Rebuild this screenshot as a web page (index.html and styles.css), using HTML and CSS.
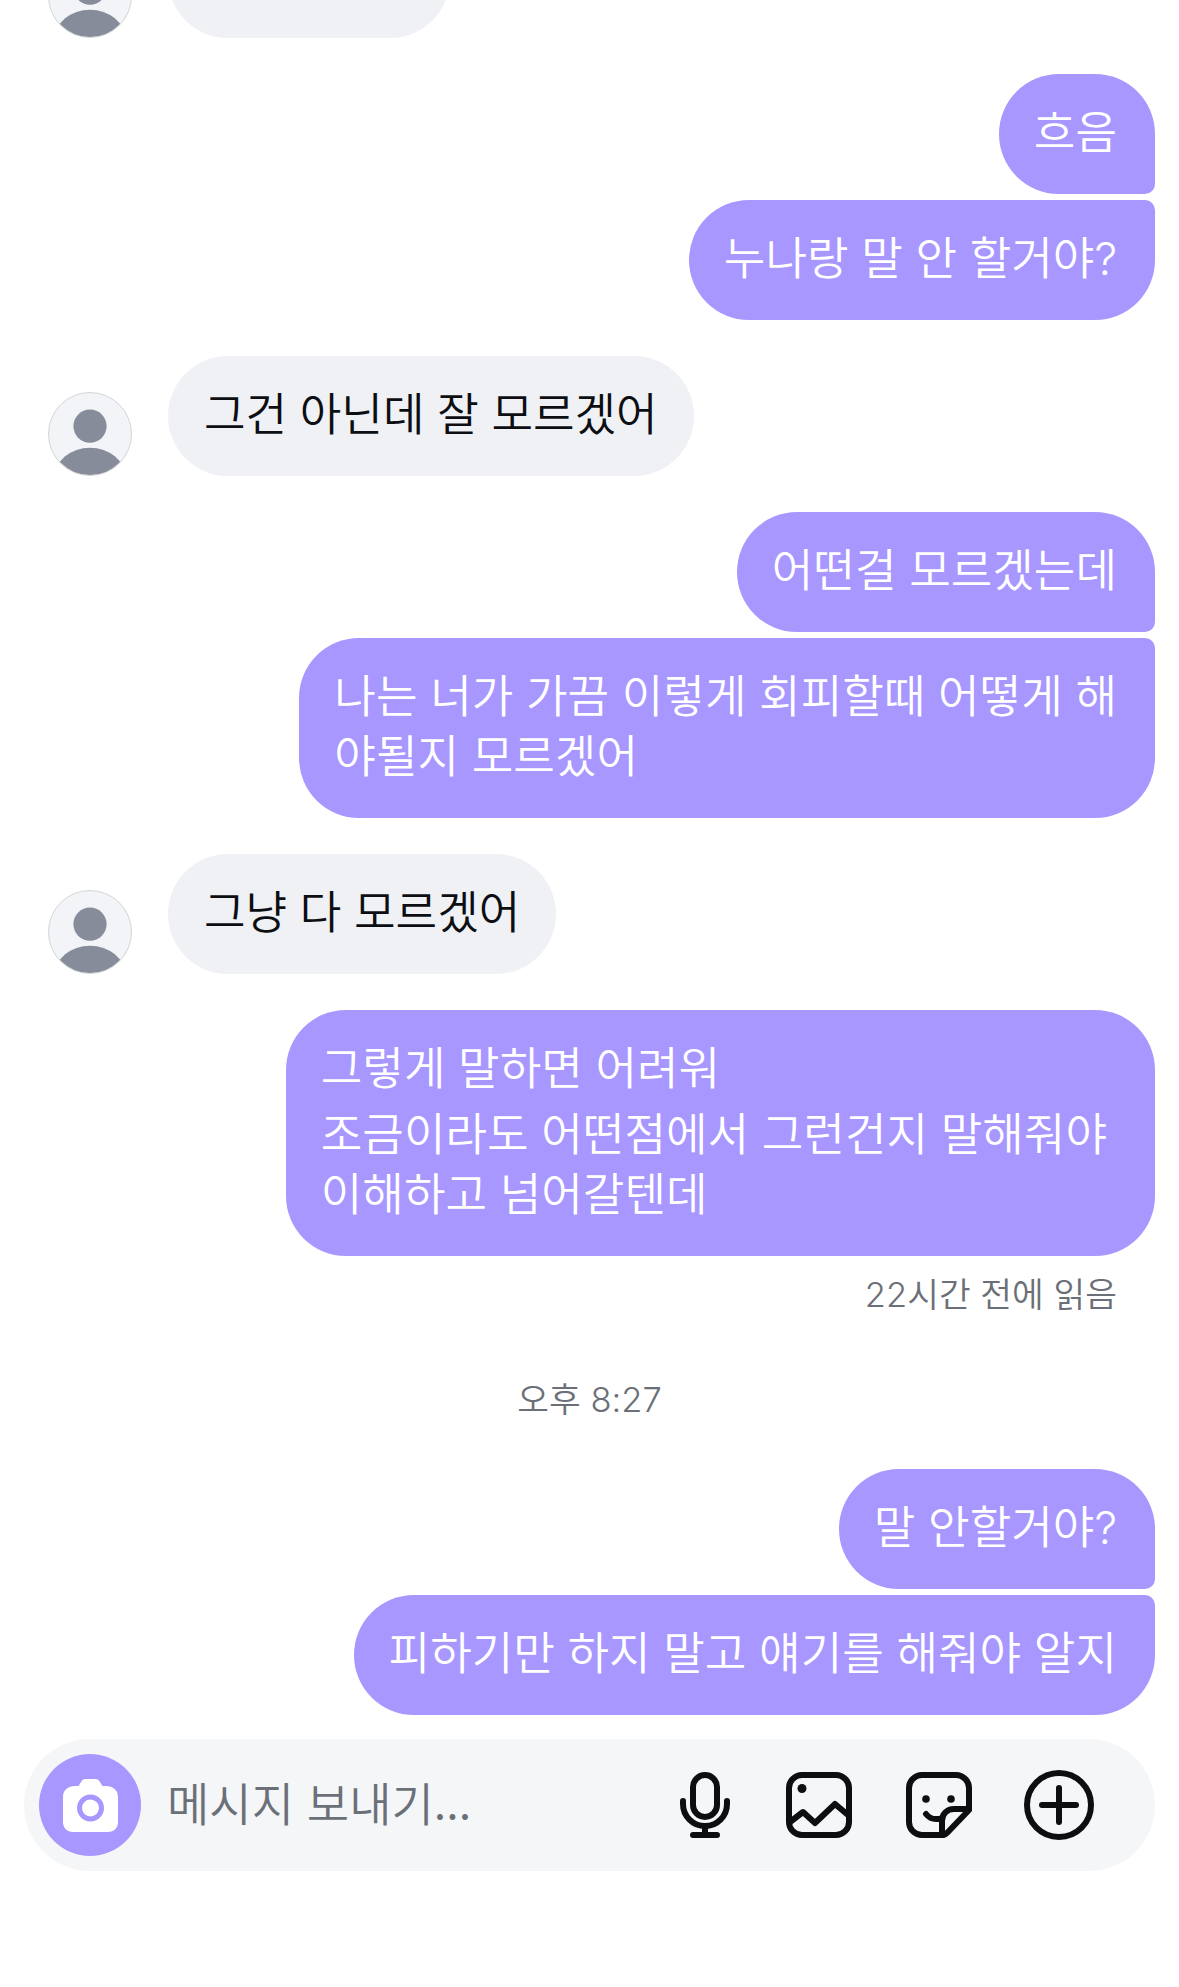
FILE: index.html
```html
<!DOCTYPE html>
<html lang="ko">
<head>
    <meta charset="UTF-8">
    <meta name="viewport" content="width=device-width, initial-scale=1.0">
    <title>Messages</title>
    <link rel="stylesheet" href="styles.css">
</head>
<body>
    <div class="thread">
        <div class="row in cut-top">
            <div class="avatar">
                <svg viewBox="0 0 84 84"><circle cx="42" cy="34" r="17" /><ellipse cx="42" cy="86" rx="36" ry="30" /></svg>
            </div>
            <div class="bubble first-bubble">&nbsp;</div>
        </div>

        <div class="group out">
            <div class="bubble top">흐음</div>
            <div class="bubble bottom">누나랑 말 안 할거야<span class="latin">?</span></div>
        </div>

        <div class="row in">
            <div class="avatar">
                <svg viewBox="0 0 84 84"><circle cx="42" cy="34" r="17" /><ellipse cx="42" cy="86" rx="36" ry="30" /></svg>
            </div>
            <div class="bubble">그건 아닌데 잘 모르겠어</div>
        </div>

        <div class="group out">
            <div class="bubble top">어떤걸 모르겠는데</div>
            <div class="bubble bottom">나는 너가 가끔 이렇게 회피할때 어떻게 해<br>야될지 모르겠어</div>
        </div>

        <div class="row in">
            <div class="avatar">
                <svg viewBox="0 0 84 84"><circle cx="42" cy="34" r="17" /><ellipse cx="42" cy="86" rx="36" ry="30" /></svg>
            </div>
            <div class="bubble">그냥 다 모르겠어</div>
        </div>

        <div class="group out">
            <div class="bubble wrapped">
                <span class="line spaced">그렇게 말하면 어려워</span>
                <span class="line">조금이라도 어떤점에서 그런건지 말해줘야</span>
                <span class="line">이해하고 넘어갈텐데</span>
            </div>
            <div class="seen">22시간 전에 읽음</div>
        </div>

        <div class="time">오후 8:27</div>

        <div class="group out">
            <div class="bubble top">말 안할거야<span class="latin">?</span></div>
            <div class="bubble bottom">피하기만 하지 말고 얘기를 해줘야 알지</div>
        </div>
    </div>

    <div class="composer">
        <div class="camera">
            <svg width="55" height="53" viewBox="0 0 55 53">
                <path class="camera-body" d="M12 7h3.500l2.500-4c1-2 2.500-3 4.500-3h10c2 0 3.500 1 4.500 3l2.500 4H43c7 0 12 4 12 11v25c0 6-4 10-10 10H10C4 53 0 49 0 43V18C0 11 5 7 12 7z" />
                <circle class="camera-lens" cx="27.500" cy="29" r="11" />
            </svg>
        </div>
        <div class="placeholder">메시지 보내기...</div>
        <div class="tools">
            <svg class="tool mic" width="50" height="66" viewBox="0 0 50 66">
                <rect x="13" y="3" width="24" height="42" rx="12" />
                <path d="M3 29v3a22 22 0 0 0 44 0v-3M25 54v9M13 63h24" />
            </svg>
            <svg class="tool picture" width="66" height="66" viewBox="0 0 66 66">
                <rect x="3" y="3" width="60" height="60" rx="13" />
                <circle class="dot" cx="16" cy="16.500" r="4.500" />
                <path d="M4 50l13-10 12 11 20-19 13 11" />
            </svg>
            <svg class="tool sticker" width="66" height="66" viewBox="0 0 66 66">
                <path d="M38 63H16A13 13 0 0 1 3 50V16A13 13 0 0 1 16 3h34a13 13 0 0 1 13 13v22L41 61c-1 1-2 2-3 2z" />
                <path d="M63 37H48c-7 0-12 5-12 12v14M20 42c4 5 10 6 16 4" />
                <circle class="dot" cx="20" cy="27" r="3.800" />
                <circle class="dot" cx="45" cy="27" r="3.800" />
            </svg>
            <svg class="tool plus" width="70" height="70" viewBox="0 0 70 70">
                <circle cx="35" cy="35" r="32" />
                <path d="M18 35h34M35 18v34" />
            </svg>
        </div>
    </div>
</body>
</html>
```

FILE: styles.css
```css
* {
    margin: 0;
    padding: 0;
    box-sizing: border-box;
}

html, body {
    height: 1987px;
    overflow: hidden;
}

body {
    background: #fff;
    font-family: "Noto Sans CJK KR", "Noto Sans", sans-serif;
    font-weight: 350;
    font-size: 45.200px;
    line-height: 60px;
    color: #0c0e12;
}

.thread {
    display: flex;
    flex-direction: column;
    gap: 36px;
    padding: 0 24px 0 48px;
    height: 1739px;
}

.row {
    display: flex;
    align-items: flex-end;
    gap: 36px;
}

.cut-top {
    margin-top: -82px;
}

.first-bubble {
    width: 282px;
}

.avatar {
    width: 84px;
    height: 84px;
    flex: none;
    border: 1px solid #d4d5d6;
    border-radius: 50%;
    background: #f2f4f7;
    overflow: hidden;
}

.avatar svg {
    display: block;
    width: 100%;
    height: 100%;
    fill: #878c9a;
}

.bubble {
    padding: 26px 36px 34px;
    border-radius: 60px;
    background: #eff1f5;
    white-space: nowrap;
}

.latin {
    font-family: Inter, sans-serif;
    line-height: 0;
}

.group {
    display: flex;
    flex-direction: column;
    gap: 6px;
}

.out {
    align-items: flex-end;
}

.out .bubble {
    padding-left: 35px;
    padding-right: 38px;
    background: #a797ff;
    color: #fff;
}

.out .top {
    border-bottom-right-radius: 10px;
}

.out .bottom {
    border-top-right-radius: 10px;
}

.out .wrapped {
    padding-right: 48px;
}

.line {
    display: block;
}

.line.spaced {
    margin-bottom: 6px;
}

.seen {
    margin-top: 8px;
    padding-right: 38px;
    font-family: Inter, "Noto Sans CJK KR", sans-serif;
    font-size: 34.500px;
    line-height: 50px;
    color: #6b7078;
}

.time {
    margin: 19px 0 8px -24px;
    text-align: center;
    font-family: Inter, "Noto Sans CJK KR", sans-serif;
    font-size: 34.500px;
    line-height: 50px;
    color: #6b7078;
}

.composer {
    display: flex;
    align-items: center;
    height: 132px;
    margin: 0 24px;
    padding-left: 15px;
    background: #f5f6f8;
    border-radius: 66px;
}

.camera {
    width: 102px;
    height: 102px;
    flex: none;
    display: flex;
    align-items: center;
    justify-content: center;
    border-radius: 50%;
    background: #a797ff;
}

.camera-body {
    fill: #fff;
}

.camera-lens {
    fill: #fff;
    stroke: #a797ff;
    stroke-width: 5;
}

.placeholder {
    margin-left: 26px;
    font-size: 46px;
    color: #6b7078;
    transform: translateY(-4px);
}

.tools {
    display: flex;
    align-items: center;
    margin-left: auto;
    margin-right: 61px;
}

.tool {
    display: block;
    fill: none;
    stroke: #0c0e12;
    stroke-width: 6;
    stroke-linecap: round;
    stroke-linejoin: round;
}

.tool .dot {
    fill: #0c0e12;
    stroke: none;
}

.picture {
    margin-left: 56px;
}

.sticker {
    margin-left: 54px;
}

.plus {
    margin-left: 52px;
}
```
